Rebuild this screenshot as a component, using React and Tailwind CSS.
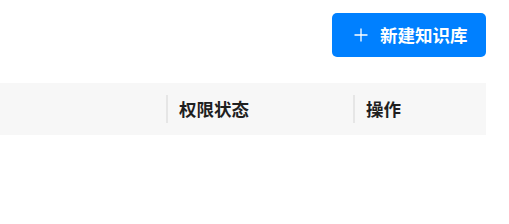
import React from 'react';

const font = { fontFamily: '"Noto Sans CJK SC", "Noto Sans", sans-serif' };

const PlusIcon = () => (
    <svg width="14" height="14" viewBox="0 0 14 14" fill="none" stroke="currentColor" strokeWidth="1.3">
        <path d="M7 0.5V13.5M0.5 7H13.5" />
    </svg>
);

const App = () => {
    return (
        <div className="w-[509px] h-[224px] bg-white overflow-hidden" style={font}>
            <div className="pr-[23px]">
                <div className="flex justify-end pt-[13px]">
                    <button className="flex items-center h-[44px] w-[154px] pl-[22px] gap-[12px] rounded-[5px] bg-[#0080ff] text-white text-[17.5px] font-bold">
                        <PlusIcon />
                        <span>新建知识库</span>
                    </button>
                </div>
                <div className="mt-[26px] flex h-[52px] bg-[#f7f7f7] text-[#1f1f1f] text-[17.5px] font-bold">
                    <div className="w-[166px]" />
                    <div className="relative w-[187px] flex items-center pl-[13px]">
                        <span className="absolute left-0 top-[12px] bottom-[12px] w-[2px] bg-[#e6e6e6]" />
                        权限状态
                    </div>
                    <div className="relative flex-1 flex items-center pl-[13px]">
                        <span className="absolute left-0 top-[12px] bottom-[12px] w-[2px] bg-[#e6e6e6]" />
                        操作
                    </div>
                </div>
            </div>
        </div>
    );
};

export default App;
